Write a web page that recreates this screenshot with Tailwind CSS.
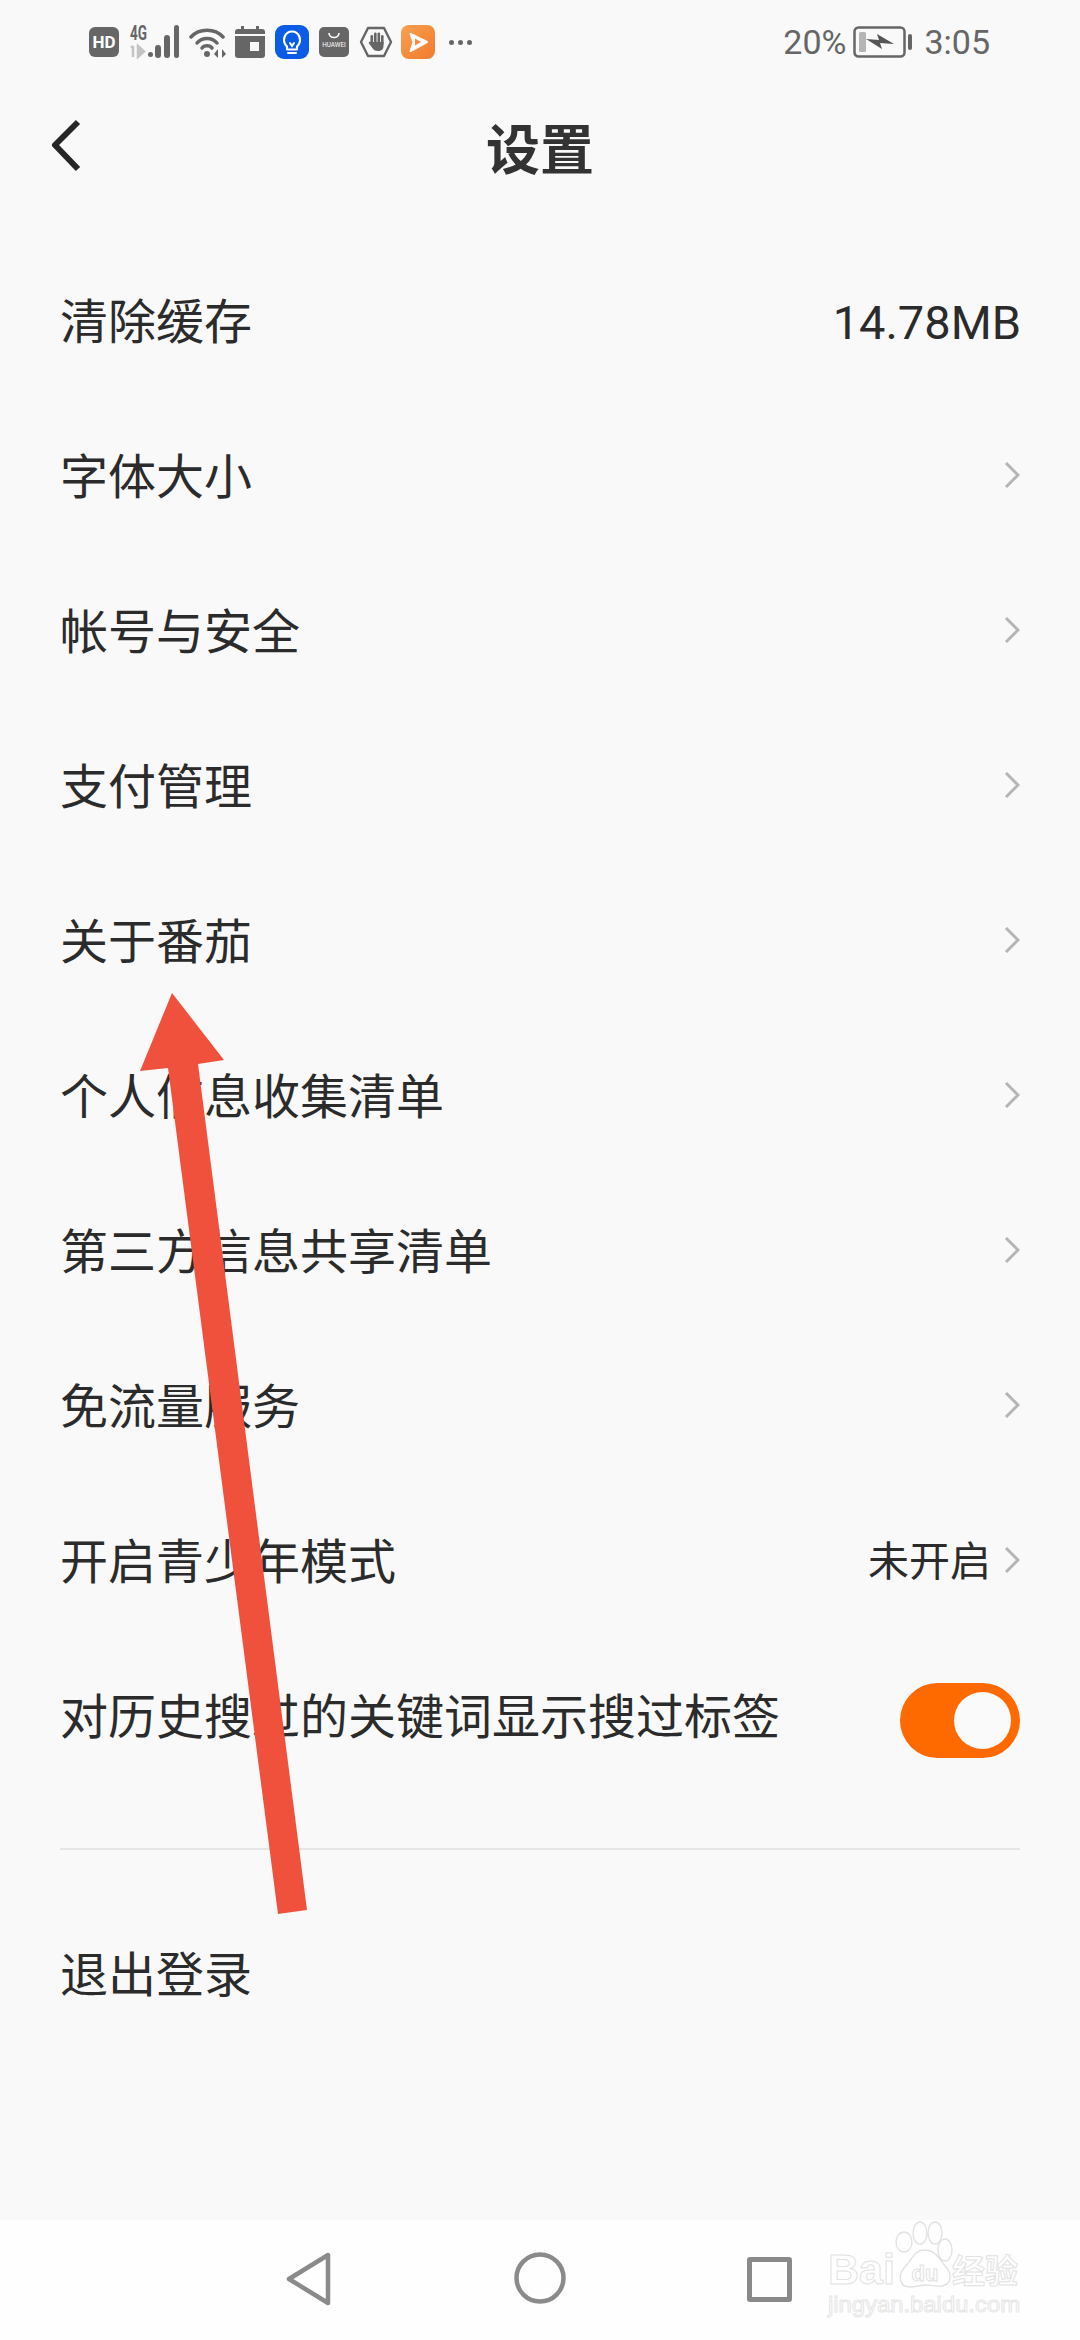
<!DOCTYPE html>
<html lang="zh">
<head>
    <meta charset="UTF-8">
    <meta name="viewport" content="width=device-width, initial-scale=1.0">
    <title>设置</title>
    <script src="https://cdn.jsdelivr.net/npm/@tailwindcss/browser@4"></script>
</head>
<body class="bg-[#f9f9f9] font-['Roboto','Noto_Sans_CJK_SC',sans-serif] text-[#2b2b2b]">
<div class="relative w-[1080px] h-[2340px] overflow-hidden flex flex-col">

    <!-- status bar -->
    <div class="h-[84px] flex items-center pl-[89px] pr-[90px] text-[#666] shrink-0">
        <svg class="w-[30px] h-[30px]" viewBox="0 0 30 30"><rect width="30" height="30" rx="6" fill="#666"/><text x="15" y="21" text-anchor="middle" font-size="17" font-weight="700" fill="#fff" font-family="Roboto">HD</text></svg>
        <svg class="w-[50px] h-[38px] ml-[11px] mb-[4px]" viewBox="0 -4 50 38">
            <text x="0" y="15" font-size="20" font-weight="700" fill="#666" font-family="Roboto" textLength="17" lengthAdjust="spacingAndGlyphs">4G</text>
            <path d="M3 21v11M1 23l2-2M8 21l6 5.500-6 5.500z" stroke="#c4c4c4" stroke-width="2.500" fill="#c4c4c4"/>
            <rect x="18" y="27" width="5" height="5" rx="2.500" fill="#666"/>
            <rect x="25" y="20" width="6" height="13" rx="3" fill="#666"/>
            <rect x="34" y="10" width="6" height="23" rx="3" fill="#666"/>
            <rect x="44" y="0" width="5" height="33" rx="2.500" fill="#666"/>
        </svg>
        <svg class="w-[38px] h-[32px] ml-[9px]" viewBox="0 0 38 32" fill="none" stroke="#666" stroke-width="3.500" stroke-linecap="round">
            <path d="M2 11C10 2 26 2 34 11"/>
            <path d="M8 17C13 11 23 11 28 17"/>
            <path d="M13 22C15 19 21 19 23 22"/>
            <circle cx="18" cy="28" r="3" fill="#666" stroke="none"/>
            <path d="M29 23l-4 5 4 4zM33 23l4 5-4 4z" fill="#666" stroke="none"/>
        </svg>
        <svg class="w-[30px] h-[32px] ml-[8px]" viewBox="0 0 30 32">
            <path d="M3 3h24a3 3 0 0 1 3 3v23a3 3 0 0 1-3 3H3a3 3 0 0 1-3-3V6a3 3 0 0 1 3-3z" fill="#666"/>
            <rect x="6" y="0" width="3" height="5" fill="#666"/><rect x="21" y="0" width="3" height="5" fill="#666"/>
            <rect x="0" y="8" width="30" height="2" fill="#f9f9f9"/>
            <rect x="15" y="16" width="9" height="9" fill="#f9f9f9"/>
        </svg>
        <svg class="w-[34px] h-[34px] ml-[10px]" viewBox="0 0 34 34" fill="none">
            <rect width="34" height="34" rx="9" fill="#0a5ce6"/>
            <path d="M12 21.500c-6-6-2-15 5-15s11 9 5 15v3h-10z" stroke="#fff" stroke-width="2.200" stroke-linejoin="round"/>
            <path d="M13 28h8M15 18l2 3 2-3" stroke="#fff" stroke-width="2" stroke-linecap="round"/>
        </svg>
        <svg class="w-[30px] h-[30px] ml-[10px]" viewBox="0 0 30 30">
            <rect width="30" height="30" rx="5" fill="#666"/>
            <path d="M10 6c0 6 10 6 10 0" fill="none" stroke="#fff" stroke-width="1.600"/>
            <text x="15" y="20" text-anchor="middle" font-size="6.400" fill="#fff" font-family="Roboto">HUAWEI</text>
        </svg>
        <svg class="w-[34px] h-[32px] ml-[10px]" viewBox="0 0 34 32">
            <path d="M9 2h16l7 14-7 14H9L2 16z" fill="none" stroke="#666" stroke-width="2.400" stroke-linejoin="round"/>
            <g fill="#666">
                <rect x="11.500" y="9" width="2.600" height="10" rx="1.300"/>
                <rect x="15" y="6.500" width="2.600" height="12" rx="1.300"/>
                <rect x="18.500" y="6.500" width="2.600" height="12" rx="1.300"/>
                <rect x="22" y="9" width="2.600" height="10" rx="1.300"/>
                <path d="M11.500 16h13v4c0 3-2 5-5.500 5-3 0-4.500-1-6-3.500l-3-4c-1-1.500 1-3 2.500-1.500z"/>
            </g>
        </svg>
        <svg class="w-[34px] h-[34px] ml-[8px]" viewBox="0 0 34 34">
            <defs><linearGradient id="orange" x1="0" y1="0" x2="1" y2="1"><stop offset="0" stop-color="#f9a050"/><stop offset="1" stop-color="#f27a2c"/></linearGradient></defs>
            <rect width="34" height="34" rx="8" fill="url(#orange)"/>
            <path d="M9.500 9L26 17 9.500 26l3-9z" fill="#fff" stroke="#fff" stroke-width="2" stroke-linejoin="round"/>
            <path d="M14 13.500l6 3.500-6 3.500z" fill="#f58a3c"/>
        </svg>
        <div class="flex gap-[4px] ml-[14px]">
            <span class="w-[5px] h-[5px] rounded-full bg-[#666]"></span>
            <span class="w-[5px] h-[5px] rounded-full bg-[#666]"></span>
            <span class="w-[5px] h-[5px] rounded-full bg-[#666]"></span>
        </div>
        <span class="ml-auto text-[34px] leading-none">20%</span>
        <svg class="w-[59px] h-[32px] ml-[7px]" viewBox="0 0 59 32">
            <rect x="1.500" y="1.500" width="50" height="29" rx="4" fill="none" stroke="#666" stroke-width="2.500"/>
            <rect x="6" y="6" width="7" height="20" rx="1.500" fill="#b5b5b5"/>
            <rect x="55" y="8" width="4" height="16" rx="2" fill="#666"/>
            <path d="M13 13L26 14 24 8 41 18 27 17 29 23z" fill="#555"/>
        </svg>
        <span class="ml-[12px] text-[34px] leading-none">3:05</span>
    </div>

    <!-- title bar -->
    <header class="relative h-[134px] flex items-center justify-center shrink-0 pt-[2px]">
        <svg class="absolute left-[49px] top-[35px] w-[33px] h-[53px]" viewBox="0 0 33 53" fill="none"><path d="M29 3L6 26l23 24" stroke="#262626" stroke-width="6" stroke-linejoin="round"/></svg>
        <h1 class="text-[54px] font-bold leading-none text-[#333]">设置</h1>
    </header>

    <!-- settings list -->
    <main class="mt-[27px] px-[60px] text-[48px] leading-none">
        <div class="h-[155px] flex items-center justify-between">
            <span>清除缓存</span>
            <span class="text-[47px] -mr-[1px]">14.78MB</span>
        </div>
        <div class="h-[155px] flex items-center justify-between">
            <span>字体大小</span>
            <svg class="w-[16px] h-[28px] mb-[5px]" viewBox="0 0 16 28" fill="none"><path d="M2 2l12 12L2 26" stroke="#b5b5b5" stroke-width="3"/></svg>
        </div>
        <div class="h-[155px] flex items-center justify-between">
            <span>帐号与安全</span>
            <svg class="w-[16px] h-[28px] mb-[5px]" viewBox="0 0 16 28" fill="none"><path d="M2 2l12 12L2 26" stroke="#b5b5b5" stroke-width="3"/></svg>
        </div>
        <div class="h-[155px] flex items-center justify-between">
            <span>支付管理</span>
            <svg class="w-[16px] h-[28px] mb-[5px]" viewBox="0 0 16 28" fill="none"><path d="M2 2l12 12L2 26" stroke="#b5b5b5" stroke-width="3"/></svg>
        </div>
        <div class="h-[155px] flex items-center justify-between">
            <span>关于番茄</span>
            <svg class="w-[16px] h-[28px] mb-[5px]" viewBox="0 0 16 28" fill="none"><path d="M2 2l12 12L2 26" stroke="#b5b5b5" stroke-width="3"/></svg>
        </div>
        <div class="h-[155px] flex items-center justify-between">
            <span>个人信息收集清单</span>
            <svg class="w-[16px] h-[28px] mb-[5px]" viewBox="0 0 16 28" fill="none"><path d="M2 2l12 12L2 26" stroke="#b5b5b5" stroke-width="3"/></svg>
        </div>
        <div class="h-[155px] flex items-center justify-between">
            <span>第三方信息共享清单</span>
            <svg class="w-[16px] h-[28px] mb-[5px]" viewBox="0 0 16 28" fill="none"><path d="M2 2l12 12L2 26" stroke="#b5b5b5" stroke-width="3"/></svg>
        </div>
        <div class="h-[155px] flex items-center justify-between">
            <span>免流量服务</span>
            <svg class="w-[16px] h-[28px] mb-[5px]" viewBox="0 0 16 28" fill="none"><path d="M2 2l12 12L2 26" stroke="#b5b5b5" stroke-width="3"/></svg>
        </div>
        <div class="h-[155px] flex items-center">
            <span>开启青少年模式</span>
            <span class="ml-auto text-[41px]">未开启</span>
            <svg class="w-[16px] h-[28px] ml-[13px] mb-[5px]" viewBox="0 0 16 28" fill="none"><path d="M2 2l12 12L2 26" stroke="#b5b5b5" stroke-width="3"/></svg>
        </div>
        <div class="h-[155px] flex items-center justify-between">
            <span>对历史搜过的关键词显示搜过标签</span>
            <div class="w-[120px] h-[75px] mt-[5px] rounded-full bg-[#ff6a00] flex items-center justify-end pr-[9px]">
                <div class="w-[57px] h-[57px] rounded-full bg-[#fafafa]"></div>
            </div>
        </div>
        <div class="mt-[53px] h-[2px] bg-[#e6e6e6]"></div>
        <div class="mt-[48px] h-[155px] flex items-center">退出登录</div>
    </main>

    <!-- nav bar -->
    <nav class="absolute left-0 right-0 bottom-0 h-[120px] bg-[#fefefe] flex items-center">
        <svg class="absolute left-[285px] top-[31px] w-[48px] h-[56px]" viewBox="0 0 48 56" fill="none"><path d="M43 4v48L4 28z" stroke="#8a8a8a" stroke-width="4.500" stroke-linejoin="round"/></svg>
        <svg class="absolute left-[514px] top-[31px] w-[52px] h-[54px]" viewBox="0 0 52 54" fill="none"><circle cx="26" cy="27" r="23.500" stroke="#8a8a8a" stroke-width="4.500"/></svg>
        <div class="absolute left-[747px] top-[37px] w-[45px] h-[45px] rounded-[3px] border-[5px] border-[#8a8a8a]"></div>

        <!-- watermark -->
        <svg class="absolute left-[824px] top-0 w-[240px] h-[120px]" viewBox="0 0 240 120" fill="none">
            <text x="4" y="64" font-size="43" font-weight="700" font-family="Liberation Sans" fill="#fff" stroke="#e2e2e2" stroke-width="1">Bai</text>
            <g fill="#fff" stroke="#e2e2e2" stroke-width="1.400">
                <ellipse cx="80" cy="22" rx="8" ry="10"/>
                <ellipse cx="96" cy="13" rx="7" ry="11"/>
                <ellipse cx="111" cy="13" rx="7" ry="11"/>
                <ellipse cx="121" cy="30" rx="7" ry="11"/>
                <path d="M100 30c-10 0-12 10-20 18-6 8-5 19 6 19 6 0 10-2 16-2s11 2 16 1c10-2 10-12 4-19-7-8-10-17-22-17z"/>
            </g>
            <text x="101" y="61" text-anchor="middle" font-size="22" font-weight="700" font-family="Liberation Sans" fill="#fff" stroke="#e2e2e2" stroke-width="1">du</text>
            <text x="128" y="63" font-size="33" font-weight="700" font-family="Noto Sans CJK SC" fill="#fff" stroke="#e2e2e2" stroke-width="1">经验</text>
            <text x="4" y="92" font-size="22" font-family="Liberation Sans" fill="#fff" stroke="#e6e6e6" stroke-width="1" textLength="192" lengthAdjust="spacingAndGlyphs">jingyan.baidu.com</text>
        </svg>
    </nav>

    <!-- annotation arrow drawn over the screenshot -->
    <svg class="absolute inset-0 w-[1080px] h-[2340px] pointer-events-none" viewBox="0 0 1080 2340">
        <path d="M172 993L224 1060L198 1064L307 1910L278 1914L168 1068L140 1071z" fill="#f0513c"/>
    </svg>
</div>
</body>
</html>
